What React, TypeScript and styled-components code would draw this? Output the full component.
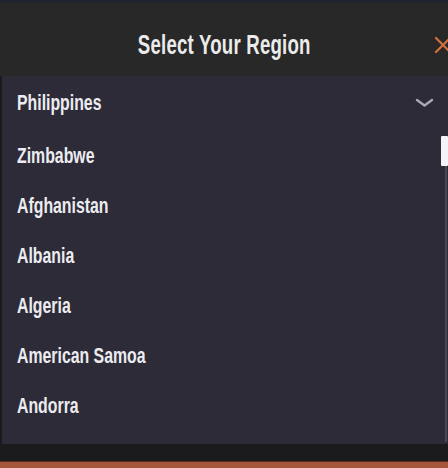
import * as React from "react";
import styled, { createGlobalStyle } from "styled-components";

const GlobalStyle = createGlobalStyle`
  html, body {
    margin: 0;
    padding: 0;
    background: #1b1b1d;
  }
  body {
    font-family: "Liberation Sans", Arial, sans-serif;
    color: #ececf0;
    overflow: hidden;
  }
`;

const Page = styled.div`
  width: 448px;
  height: 468px;
  display: flex;
  flex-direction: column;
  border-top: 3px solid #1e2531;
  box-sizing: border-box;
  overflow: hidden;
`;

const Header = styled.div`
  position: relative;
  height: 73px;
  flex-shrink: 0;
  display: flex;
  align-items: center;
  justify-content: center;
  padding-top: 12px;
  box-sizing: border-box;
  background: #282828;
`;

/* the game font is a tall condensed face; squeeze Liberation Sans to match */
const Title = styled.h1`
  margin: 0;
  font-size: 27px;
  font-weight: 700;
  letter-spacing: 0.3px;
  color: #ebebeb;
  white-space: nowrap;
  transform: scaleX(0.69);
`;

const CloseButton = styled.button`
  position: absolute;
  right: -6px;
  top: 31px;
  width: 22px;
  height: 22px;
  padding: 0;
  border: none;
  background: none;
  display: flex;
  align-items: center;
  justify-content: center;
`;

const Panel = styled.div`
  height: 368px;
  flex-shrink: 0;
  margin-left: 2px;
  background: #2d2b38;
  display: flex;
  flex-direction: column;
`;

const Selected = styled.div`
  height: 54px;
  flex-shrink: 0;
  display: flex;
  align-items: center;
  justify-content: space-between;
  padding: 0 14px 0 15px;
`;

const ItemText = styled.span`
  display: inline-block;
  font-size: 22px;
  font-weight: 700;
  color: #ececf0;
  white-space: nowrap;
  transform: scaleX(0.72);
  transform-origin: left center;
`;

const ListArea = styled.div`
  flex: 1;
  display: grid;
  grid-template-columns: 1fr 7px;
`;

const List = styled.ul`
  list-style: none;
  margin: 0;
  padding: 1px 0 0;
`;

const Row = styled.li`
  height: 50px;
  display: flex;
  align-items: center;
  padding-left: 15px;
`;

const Scroll = styled.div`
  display: flex;
  flex-direction: column;
  align-items: center;
  padding: 6px 0 2px;
`;

const Thumb = styled.div`
  width: 7px;
  height: 30px;
  background: #f4f4f8;
  border-radius: 1px;
`;

const Track = styled.div`
  flex: 1;
  width: 2px;
  margin-left: 2px;
  background: #4a4856;
`;

const Gap = styled.div`
  height: 17px;
  flex-shrink: 0;
  background: #1b1b1d;
`;

const Footer = styled.div`
  flex: 1;
  background: #a4573d;
  border-top: 1px solid #5e2d20;
`;

const countries = [
  "Zimbabwe",
  "Afghanistan",
  "Albania",
  "Algeria",
  "American Samoa",
  "Andorra",
];

const App = () => {
  return (
    <>
      <GlobalStyle />
      <Page>
        <Header>
          <Title>Select Your Region</Title>
          <CloseButton>
            <svg width="18" height="18" viewBox="0 0 18 18">
              <path d="M2 2 L16 16 M16 2 L2 16" stroke="#d4703f" strokeWidth="2.2" strokeLinecap="round" />
            </svg>
          </CloseButton>
        </Header>
        <Panel>
          <Selected>
            <ItemText>Philippines</ItemText>
            <svg width="19" height="10" viewBox="0 0 19 10">
              <path d="M2 2 L9.5 7.5 L17 2" stroke="#a9a9b2" strokeWidth="2.4" fill="none" strokeLinecap="round" strokeLinejoin="round" />
            </svg>
          </Selected>
          <ListArea>
            <List>
              {countries.map((name) => (
                <Row key={name}>
                  <ItemText>{name}</ItemText>
                </Row>
              ))}
            </List>
            <Scroll>
              <Thumb />
              <Track />
            </Scroll>
          </ListArea>
        </Panel>
        <Gap />
        <Footer />
      </Page>
    </>
  );
};

export default App;
